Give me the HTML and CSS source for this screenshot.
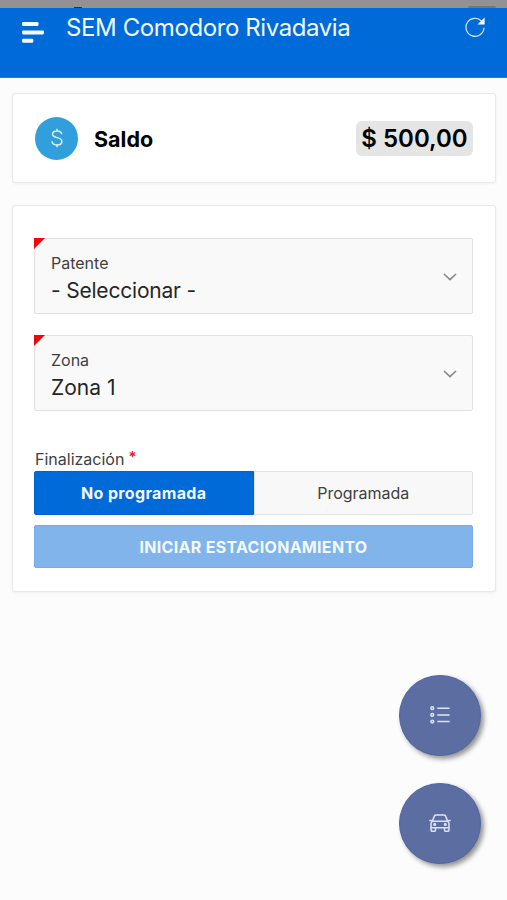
FILE: index.html
```
<!DOCTYPE html>
<html lang="es">
<head>
<meta charset="utf-8">
<title>SEM Comodoro Rivadavia</title>
<link rel="stylesheet" href="styles.css">
</head>
<body>
<div class="statusbar"><i class="status-dot"></i><i class="status-battery"></i></div>
<header class="header">
  <svg class="menu-icon" width="22" height="22" viewBox="0 0 22 22" fill="#f6fbff"><rect width="16.500" height="4" rx="1.300"/><rect y="8.400" width="22" height="4" rx="1.300"/><rect y="16.800" width="11.300" height="4" rx="1.300"/></svg>
  <h1 class="title"><span>SEM Comodoro Rivadavia</span></h1>
  <svg class="refresh-icon" width="20" height="20" viewBox="0 0 20 20"><path d="M16.500 4A9 9 0 1 0 19 10.800" fill="none" stroke="#d9ecff" stroke-width="1.200"/><path d="M19.600.4v7.200h-7.200z" fill="#fff"/></svg>
</header>
<main class="content">
  <section class="card balance">
    <span class="coin"><svg width="12" height="20" viewBox="0 0 12 20" fill="none" stroke="#d9f1ff" stroke-width="1.500"><path d="M10.700 6.200C10.500 4 8.700 3 6 3 3.300 3 1.500 4.300 1.500 6.300 1.500 10.800 10.900 8.400 10.900 13.200 10.900 15.500 8.900 17 6 17 3.100 17 1.200 15.700 1 13.300M6 .7V3M6 17v2.300"/></svg></span>
    <h2 class="balance-label"><span>Saldo</span></h2>
    <strong class="amount"><span>$ 500,00</span></strong>
  </section>
  <section class="card form">
    <div class="field">
      <div><div class="label"><span>Patente</span></div><div class="value"><span>- Seleccionar -</span></div></div>
      <svg class="chevron" width="14" height="8" viewBox="0 0 14 8"><path d="M1 1l6 5.600L13 1"/></svg>
    </div>
    <div class="field">
      <div><div class="label"><span>Zona</span></div><div class="value zone"><span>Zona 1</span></div></div>
      <svg class="chevron" width="14" height="8" viewBox="0 0 14 8"><path d="M1 1l6 5.600L13 1"/></svg>
    </div>
    <div class="group-label"><span>Finalización</span><b class="required">*</b></div>
    <div class="segmented">
      <button class="segment selected"><span>No programada</span></button>
      <button class="segment"><span>Programada</span></button>
    </div>
    <button class="submit"><span>INICIAR ESTACIONAMIENTO</span></button>
  </section>
</main>
<nav class="fabs">
  <button class="fab"><svg width="20" height="18" viewBox="0 0 20 18" fill="none" stroke="#dce4fb"><g stroke-width="1.500"><circle cx="2.300" cy="2.200" r="1.400"/><circle cx="2.300" cy="8.900" r="1.400"/><circle cx="2.300" cy="15.600" r="1.400"/></g><path stroke-width="1.500" d="M7.300 2.200h12.300M7.300 8.900h12.300M7.300 15.600h12.300"/></svg></button>
  <button class="fab"><svg width="22" height="18" viewBox="0 0 22 18" fill="none" stroke="#dce4fb" stroke-width="1.500"><path d="M3.300 7.200L5.500 1.900Q5.900 1 6.800 1h8.400q.9 0 1.300.9l2.200 5.300M.3 6.400h2.400M19.300 6.400h2.400M3.300 7.200h15.400q1.300 1 1.300 3v6q0 1-1 1h-2.500q-1 0-1-1v-2.500h-9v2.500q0 1-1 1H3q-1 0-1-1v-6q0-2 1.300-3zM2 13.700h18"/><circle cx="5.700" cy="10.400" r=".8" fill="#e4eaff"/><circle cx="16.300" cy="10.400" r=".8" fill="#e4eaff"/></svg></button>
</nav>
</body>
</html>
```
FILE: styles.css
```
* { box-sizing: border-box; }
body { margin: 0; height: 900px; overflow: hidden; background: #fcfcfc; font-family: Inter, "Liberation Sans", sans-serif; color: #262626; position: relative; }
button { font: inherit; border: 0; padding: 0; margin: 0; }
h1, h2 { margin: 0; }
svg { display: block; flex: none; }
.statusbar { height: 8px; background: #929292; display: flex; align-items: flex-end; justify-content: space-between; padding: 0 11px 0 74px; }
.status-dot { width: 8px; height: 1px; background: #333; }
.status-battery { width: 28px; height: 2px; background: #777; border-radius: 2px 2px 0 0; }
.header { height: 70px; background: #006ad9; display: flex; align-items: flex-start; padding: 0 22px; border-bottom: 1px solid #2b7bd6; }
.menu-icon { margin-top: 14px; }
.title { margin: 5px 0 0 22px; flex: 1; font-size: 24px; line-height: 30px; font-weight: 400; letter-spacing: -0.4px; color: #f2f9ff; white-space: nowrap; }
.refresh-icon { margin-top: 9px; }
.content { padding: 15px 11px 0 12px; }
.card { background: #fff; border: 1px solid #e8e8e8; border-radius: 3px; box-shadow: 0 1px 3px rgba(0,0,0,.05); }
.balance { height: 90px; display: flex; align-items: center; padding: 0 22px; }
.coin { width: 43px; height: 43px; border-radius: 50%; background: #309fdb; display: flex; align-items: center; justify-content: center; }
.balance-label { margin: 2px 0 0 16px; font-size: 21.5px; line-height: 28px; color: #000; font-weight: 650; }
.amount { margin-left: auto; width: 117px; height: 35px; border-radius: 6px; background: #e5e5e5; font-size: 24px; line-height: 35px; text-align: center; color: #000; font-weight: 600; white-space: nowrap; }
.form { margin-top: 22px; height: 387px; padding: 32px 22px 0 21px; }
.field { position: relative; height: 76px; margin-bottom: 21px; border: 1px solid #e0e0e0; border-radius: 2px; background: #f9f9f9; display: flex; justify-content: space-between; padding: 14px 15px 0 16px; }
.field::before { content: ""; position: absolute; left: -1px; top: -1px; border-top: 11px solid #ee0909; border-right: 11px solid transparent; }
.label { font-size: 16px; line-height: 20px; color: #404040; }
.value { font-size: 21px; line-height: 28px; margin-top: 4px; letter-spacing: -0.2px; }
.value.zone { letter-spacing: 0; }
.chevron { margin-top: 20px; fill: none; stroke: #858585; stroke-width: 1.500; }
.group-label { margin-top: 38px; height: 22px; font-size: 16px; line-height: 20px; color: #404040; display: flex; padding-left: 1px; }
.required { color: #f01414; font-size: 15px; font-weight: 600; margin: -2px 0 0 4px; }
.segmented { display: flex; height: 44px; }
.segment { flex: 1; background: #f8f8f8; border: 1px solid #e0e0e0; border-radius: 0 2px 2px 0; font-size: 16px; color: #404040; }
.segment.selected { background: #006ad9; border-color: #0062cc; border-radius: 2px 0 0 2px; color: #f4f9ff; font-weight: 650; letter-spacing: .35px; }
.submit { display: block; width: 100%; height: 43px; margin-top: 10px; background: #80b4eb; border: 1px solid #76ade7; border-radius: 2px; color: #f4f9ff; font-size: 16px; font-weight: 650; letter-spacing: .3px; }
.fabs { position: absolute; right: 26px; top: 675px; display: grid; gap: 27px; }
.fab { width: 82px; height: 81px; border-radius: 50%; background: #5c6da2; border: 1px solid #5066a4; box-shadow: 3px 3px 5px rgba(0,0,0,.42); display: flex; align-items: center; justify-content: center; }
.fab svg { margin: -2px 0 0 -1px; }
```
